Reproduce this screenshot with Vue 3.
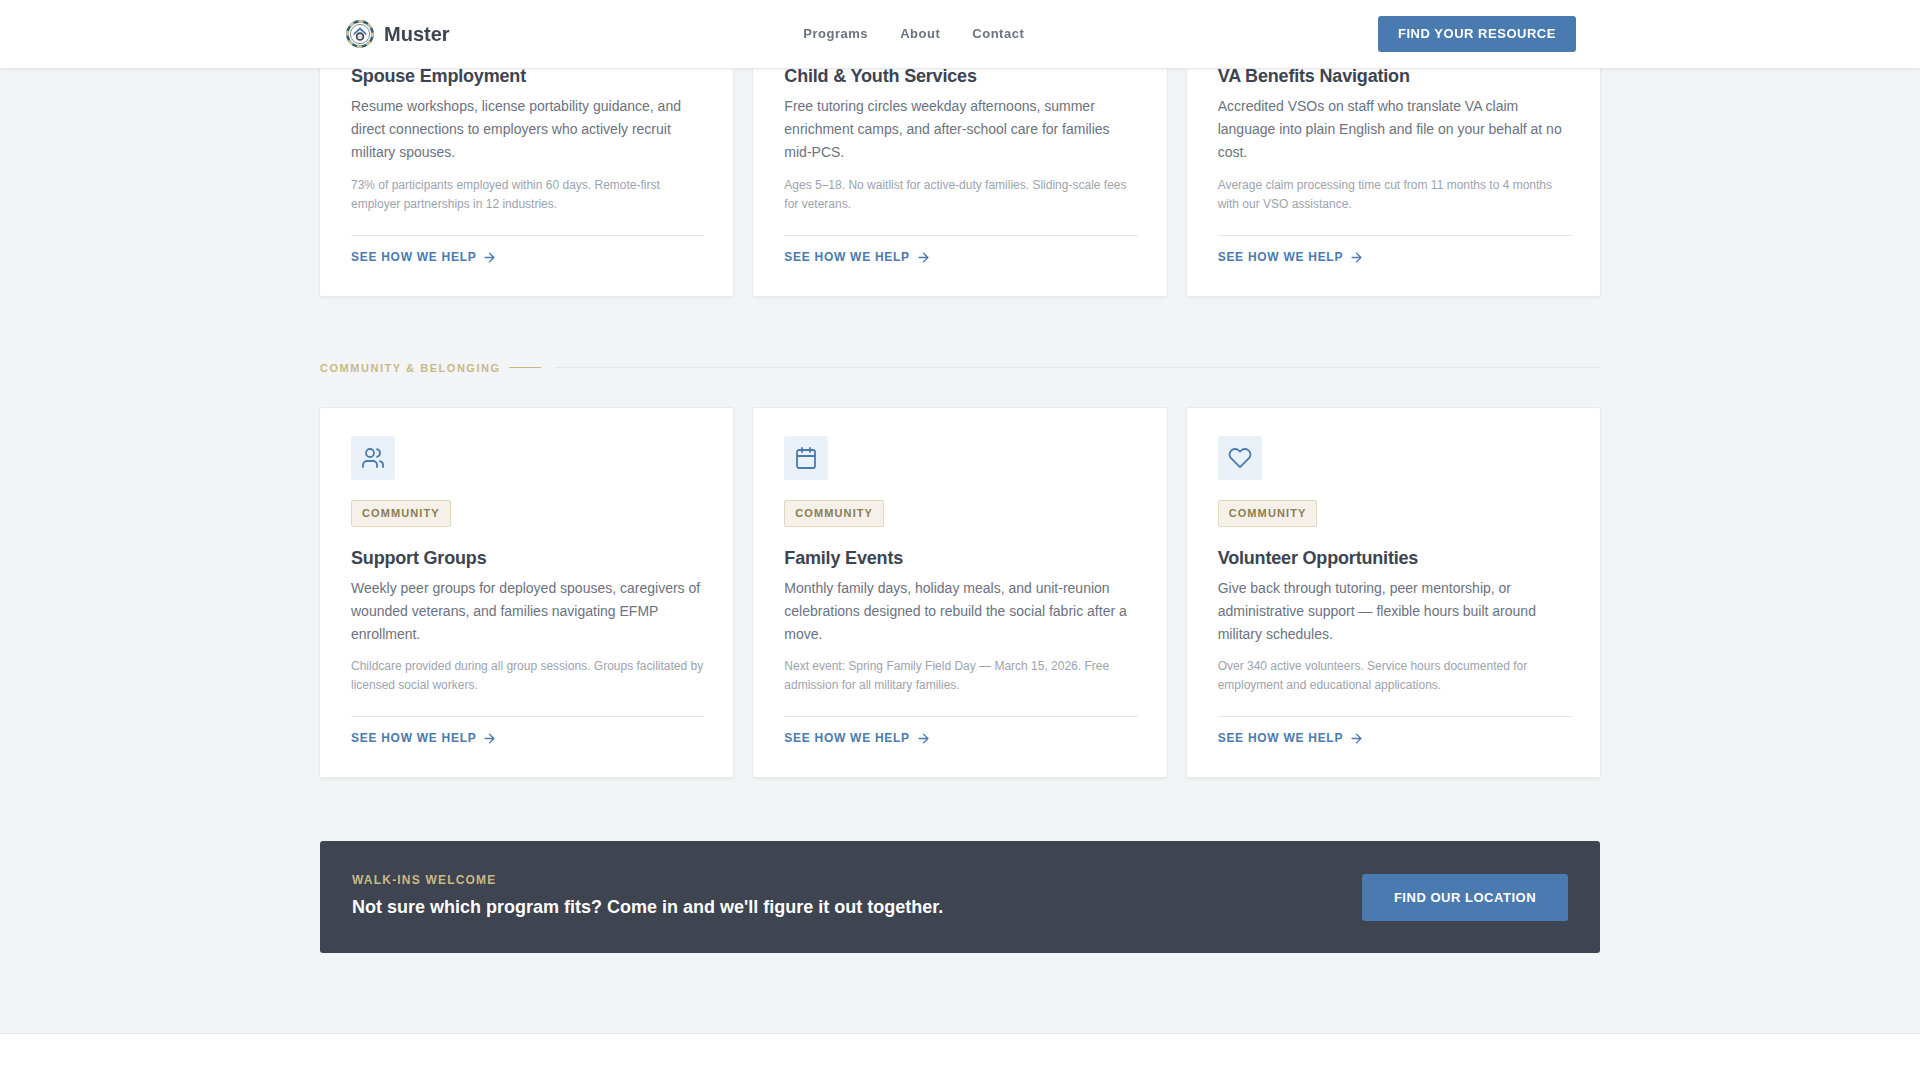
<script setup>
const topCards = [
  { title: 'Spouse Employment', desc: 'Resume workshops, license portability guidance, and direct connections to employers who actively recruit military spouses.', note: '73% of participants employed within 60 days. Remote-first employer partnerships in 12 industries.' },
  { title: 'Child & Youth Services', desc: 'Free tutoring circles weekday afternoons, summer enrichment camps, and after-school care for families mid-PCS.', note: 'Ages 5–18. No waitlist for active-duty families. Sliding-scale fees for veterans.' },
  { title: 'VA Benefits Navigation', desc: 'Accredited VSOs on staff who translate VA claim language into plain English and file on your behalf at no cost.', note: 'Average claim processing time cut from 11 months to 4 months with our VSO assistance.' },
]
const communityCards = [
  { icon: 'users', title: 'Support Groups', desc: 'Weekly peer groups for deployed spouses, caregivers of wounded veterans, and families navigating EFMP enrollment.', note: 'Childcare provided during all group sessions. Groups facilitated by licensed social workers.' },
  { icon: 'calendar', title: 'Family Events', desc: 'Monthly family days, holiday meals, and unit-reunion celebrations designed to rebuild the social fabric after a move.', note: 'Next event: Spring Family Field Day — March 15, 2026. Free admission for all military families.' },
  { icon: 'heart', title: 'Volunteer Opportunities', desc: 'Give back through tutoring, peer mentorship, or administrative support — flexible hours built around military schedules.', note: 'Over 340 active volunteers. Service hours documented for employment and educational applications.' },
]
</script>

<template>
  <div class="page">
    <header class="nav">
      <div class="nav-inner">
        <a class="brand">
          <svg class="logo" viewBox="0 0 28 28" fill="none">
            <circle cx="14" cy="14" r="12.6" stroke="#2f5f6e" stroke-width="2.6" />
            <circle cx="14" cy="14" r="12.6" stroke="#cfc79f" stroke-width="2.6" stroke-dasharray="5 4.9" stroke-dashoffset="2" />
            <circle cx="14" cy="14" r="9.6" stroke="#7d8f8c" stroke-width="1" />
            <path d="M7.6 13.2 14 7.2l6.4 6v2.2L14 10l-6.4 5.4z" fill="#4a7bb0" />
            <circle cx="14" cy="16.6" r="3.4" stroke="#3d4451" stroke-width="1.7" fill="#dfe2e2" />
          </svg>
          <span class="brand-name">Muster</span>
        </a>
        <nav class="links">
          <a>Programs</a>
          <a>About</a>
          <a>Contact</a>
        </nav>
        <button class="nav-btn">FIND YOUR RESOURCE</button>
      </div>
    </header>

    <main class="main">
      <div class="grid">
        <article v-for="c in topCards" :key="c.title" class="card card-top">
          <h3>{{ c.title }}</h3>
          <p class="desc">{{ c.desc }}</p>
          <p class="note">{{ c.note }}</p>
          <a class="more">SEE HOW WE HELP
            <svg viewBox="0 0 24 24" fill="none" stroke="currentColor" stroke-width="2.25" stroke-linecap="round" stroke-linejoin="round"><path d="M5 12h14M12 5l7 7-7 7" /></svg>
          </a>
        </article>
      </div>

      <div class="section-label">
        <span class="label-text">COMMUNITY &amp; BELONGING</span>
        <span class="label-dash"></span>
        <span class="label-line"></span>
      </div>

      <div class="grid">
        <article v-for="c in communityCards" :key="c.title" class="card card-community">
          <div class="icon">
            <svg viewBox="0 0 24 24" fill="none" stroke="#4a7bb0" stroke-width="1.8" stroke-linecap="round" stroke-linejoin="round">
              <template v-if="c.icon === 'users'">
                <path d="M16 21v-2a4 4 0 0 0-4-4H6a4 4 0 0 0-4 4v2" />
                <circle cx="9" cy="7" r="4" />
                <path d="M22 21v-2a4 4 0 0 0-3-3.87" />
                <path d="M16 3.13a4 4 0 0 1 0 7.75" />
              </template>
              <template v-else-if="c.icon === 'calendar'">
                <rect x="3" y="4" width="18" height="18" rx="2" />
                <path d="M16 2v4M8 2v4M3 10h18" />
              </template>
              <template v-else>
                <path d="M20.84 4.61a5.5 5.5 0 0 0-7.78 0L12 5.67l-1.06-1.06a5.5 5.5 0 0 0-7.78 7.78l1.06 1.06L12 21.23l7.78-7.78 1.06-1.06a5.5 5.5 0 0 0 0-7.78z" />
              </template>
            </svg>
          </div>
          <span class="tag">COMMUNITY</span>
          <h3>{{ c.title }}</h3>
          <p class="desc">{{ c.desc }}</p>
          <p class="note">{{ c.note }}</p>
          <a class="more">SEE HOW WE HELP
            <svg viewBox="0 0 24 24" fill="none" stroke="currentColor" stroke-width="2.25" stroke-linecap="round" stroke-linejoin="round"><path d="M5 12h14M12 5l7 7-7 7" /></svg>
          </a>
        </article>
      </div>

      <section class="cta">
        <div class="cta-copy">
          <div class="cta-eyebrow">WALK-INS WELCOME</div>
          <div class="cta-title">Not sure which program fits? Come in and we'll figure it out together.</div>
        </div>
        <button class="cta-btn">FIND OUR LOCATION</button>
      </section>
    </main>

    <footer class="footer"></footer>
  </div>
</template>

<style>
html, body { margin: 0; background: #f3f4f6; }
</style>

<style scoped>
.page {
  font-family: "Liberation Sans", Arial, sans-serif;
  background: #f3f4f6;
  color: #3d4451;
  height: 1080px;
  overflow: hidden;
  display: flex;
  flex-direction: column;
}
.nav {
  position: fixed;
  top: 0;
  left: 0;
  right: 0;
  height: 68px;
  background: #fff;
  border-bottom: 1px solid #e5e7eb;
  box-shadow: 0 1px 3px rgba(0, 0, 0, 0.06);
  z-index: 10;
}
.nav-inner {
  width: 1232px;
  height: 100%;
  margin: 0 auto;
  display: flex;
  align-items: center;
  justify-content: space-between;
}
.brand { display: flex; align-items: center; gap: 10px; margin-left: 2px; }
.logo { width: 28px; height: 28px; flex: none; }
.brand-name { font-size: 20px; font-weight: 700; color: #3d4451; }
.links { display: flex; gap: 32px; padding-bottom: 1px; }
.links a { font-size: 13px; font-weight: 700; letter-spacing: 0.04em; color: #6b7280; }
.nav-btn {
  width: 198px;
  height: 36px;
  border: 0;
  border-radius: 3px;
  background: #4a7bb0;
  color: #fff;
  font: 700 13px "Liberation Sans", Arial, sans-serif;
  letter-spacing: 0.04em;
  padding-bottom: 2px;
}
.main {
  width: 1280px;
  margin: 0 auto;
  flex: 1;
}
.grid {
  display: grid;
  grid-template-columns: repeat(3, 1fr);
  gap: 20px;
}
.card {
  background: #fff;
  border-top: 1px solid #e8eaee;
  border-bottom: 1px solid #e8eaee;
  border-radius: 2px;
  box-shadow: -1px 0 0 #e8eaee, 1px 0 0 #e8eaee, 0 1px 3px rgba(0, 0, 0, 0.06);
  padding: 28px 29px 32px 31px;
  display: flex;
  flex-direction: column;
  align-items: flex-start;
}
.card-top { border-top: 0; border-radius: 0 0 2px 2px; padding-top: 65px; }
.icon {
  width: 44px;
  height: 44px;
  border-radius: 3px;
  background: #ebf1f9;
  display: flex;
  align-items: center;
  justify-content: center;
  margin-bottom: 20px;
}
.icon svg { width: 24px; height: 24px; }
.tag {
  box-sizing: border-box;
  height: 27px;
  padding: 0 10px;
  border: 1px solid #e2d8bc;
  border-radius: 2px;
  background: #f5f1e8;
  color: #8a7d55;
  font-size: 11px;
  font-weight: 700;
  letter-spacing: 0.1em;
  line-height: 25px;
  margin-bottom: 20px;
}
h3 {
  margin: 0 0 7px;
  font-size: 18px;
  font-weight: 700;
  line-height: 23px;
  letter-spacing: -0.01em;
  color: #3d4451;
}
.desc {
  margin: 0 0 12px;
  font-size: 14px;
  line-height: 23px;
  color: #6b7280;
}
.card-community .desc { margin-bottom: 11px; }
.note {
  margin: 0 0 21px;
  font-size: 12px;
  line-height: 19px;
  color: #9ca3af;
}
.more {
  align-self: stretch;
  border-top: 1px solid #e5e7eb;
  padding-top: 14px;
  font-size: 12px;
  font-weight: 700;
  letter-spacing: 0.06em;
  line-height: 14px;
  color: #4a7bb0;
  display: flex;
  align-items: center;
  gap: 6px;
}
.more svg { width: 15px; height: 15px; margin: -1px 0; }
.section-label {
  display: flex;
  align-items: center;
  margin: 62px 0 32px;
  height: 16px;
}
.label-text {
  font-size: 11px;
  font-weight: 700;
  letter-spacing: 0.14em;
  color: #c8b98a;
  padding-top: 2px;
}
.label-dash { width: 32px; height: 1px; background: #c8b98a; margin: 0 14px 0 8px; }
.label-line { flex: 1; height: 1px; background: #e5e7eb; }
.cta {
  margin-top: 63px;
  height: 112px;
  box-sizing: border-box;
  padding: 0 32px;
  background: #3e4450;
  border-radius: 3px;
  display: flex;
  align-items: center;
  justify-content: space-between;
}
.cta-copy { padding-bottom: 3px; }
.cta-eyebrow {
  font-size: 12px;
  font-weight: 700;
  letter-spacing: 0.1em;
  color: #c8b98a;
  margin-bottom: 10px;
}
.cta-title { font-size: 18px; font-weight: 700; color: #fff; }
.cta-btn {
  width: 206px;
  height: 47px;
  border: 0;
  border-radius: 3px;
  background: #4a7bb0;
  color: #fff;
  font: 700 13px "Liberation Sans", Arial, sans-serif;
  letter-spacing: 0.04em;
}
.footer {
  height: 47px;
  flex: none;
  background: #fff;
  border-top: 1px solid #e5e7eb;
  box-sizing: border-box;
}
</style>
